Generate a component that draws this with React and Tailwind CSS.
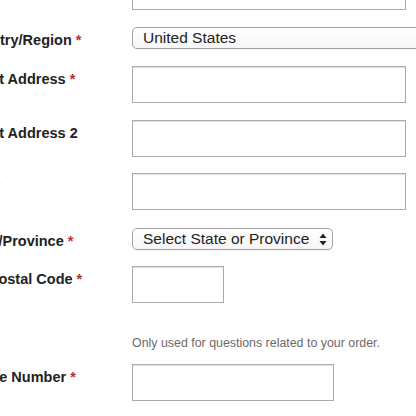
import React from 'react';

const Label = ({ text, required }) => (
    <div className="w-[169px] shrink-0 pt-[5px] text-[14.5px] leading-[16px] font-bold text-[#222] whitespace-nowrap">
        {text}
        {required && <span className="text-[#b8312f] ml-[4px]">*</span>}
    </div>
);

const TextBox = ({ width = 'w-[274px]' }) => (
    <input
        type="text"
        className={`${width} shrink-0 h-[37px] bg-white border border-[#ababab] shadow-[inset_0_1px_1px_rgba(0,0,0,0.12)] outline-none`}
    />
);

const Spinner = () => (
    <svg width="8" height="13" viewBox="0 0 8 13" className="shrink-0">
        <path d="M4 0.5 L7.5 5 L0.5 5 Z" fill="#222" />
        <path d="M4 12.5 L7.5 8 L0.5 8 Z" fill="#222" />
    </svg>
);

const SelectBox = ({ value, width, arrow }) => (
    <div
        className={`${width} shrink-0 h-[22px] flex items-center justify-between pl-[10px] pr-[5px] rounded-[5px] border border-[#a3a3a3] bg-gradient-to-b from-white to-[#f6f6f6] text-[15.5px] leading-[18px] text-[#222] shadow-[0_1px_0_rgba(0,0,0,0.04)]`}
    >
        <span className="whitespace-nowrap">{value}</span>
        {arrow && <Spinner />}
    </div>
);

export default function App() {
    return (
        <div className="w-[416px] h-[416px] overflow-hidden bg-white font-['Liberation_Sans',Arial,sans-serif]">
            <div className="ml-[-37px] mt-[-27px] flex flex-col">
                {/* partial field from above */}
                <div className="flex">
                    <Label text="Company" />
                    <TextBox />
                </div>

                <div className="flex mt-[17px]">
                    <Label text="Country/Region" required />
                    <SelectBox value="United States" width="w-[340px]" />
                </div>

                <div className="flex mt-[17px]">
                    <Label text="Street Address" required />
                    <TextBox />
                </div>

                <div className="flex mt-[17px]">
                    <Label text="Street Address 2" />
                    <TextBox />
                </div>

                <div className="flex mt-[16px]">
                    <Label text="City" required />
                    <TextBox />
                </div>

                <div className="flex mt-[18px]">
                    <Label text="State/Province" required />
                    <SelectBox value="Select State or Province" width="w-[201px]" arrow />
                </div>

                <div className="flex mt-[16px]">
                    <Label text="Zip/Postal Code" required />
                    <TextBox width="w-[92px]" />
                </div>

                <div className="flex mt-[33px]">
                    <div className="w-[169px] shrink-0" />
                    <p className="text-[12.4px] leading-[14px] text-[#6b6b6b] whitespace-nowrap">
                        Only used for questions related to your order.
                    </p>
                </div>

                <div className="flex mt-[14px]">
                    <Label text="Phone Number" required />
                    <TextBox width="w-[202px]" />
                </div>
            </div>
        </div>
    );
}
